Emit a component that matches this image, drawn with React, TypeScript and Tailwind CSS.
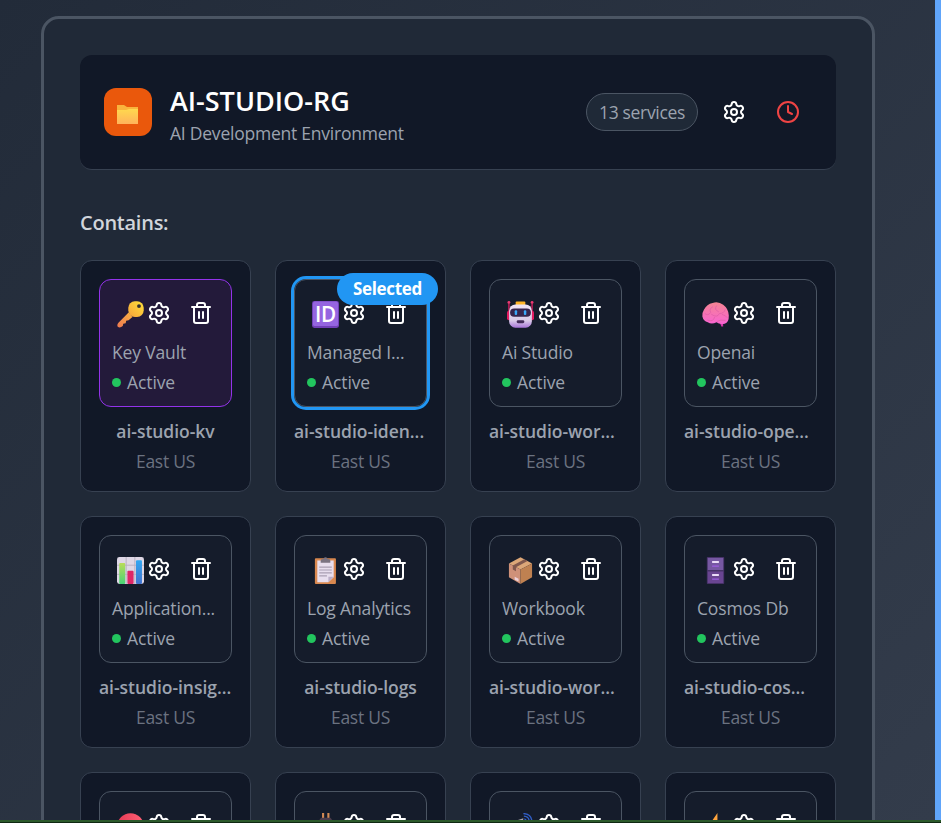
import type { ReactNode } from "react";
import { Clock, Settings, Trash2 } from "lucide-react";

type Service = {
  icon: string;
  type?: string;
  name?: string;
  tone?: "purple" | "selected";
};

const services: Service[] = [
  { icon: "key", type: "Key Vault", name: "ai-studio-kv", tone: "purple" },
  { icon: "id", type: "Managed I...", name: "ai-studio-iden...", tone: "selected" },
  { icon: "robot", type: "Ai Studio", name: "ai-studio-wor..." },
  { icon: "brain", type: "Openai", name: "ai-studio-ope..." },
  { icon: "chart", type: "Application...", name: "ai-studio-insig..." },
  { icon: "clipboard", type: "Log Analytics", name: "ai-studio-logs" },
  { icon: "box", type: "Workbook", name: "ai-studio-wor..." },
  { icon: "cabinet", type: "Cosmos Db", name: "ai-studio-cos..." },
  { icon: "red" },
  { icon: "plug" },
  { icon: "dish" },
  { icon: "bolt" },
];

const glyphs: Record<string, ReactNode> = {
  key: (
    <>
      <path d="M12 12 1.5 22.5Q-.4 24.8.8 26.8Q3 28.6 6 26L6.5 23.5 9 23 9.5 20.5 12 20 16 16.5Z" fill="url(#keyShaft)" />
      <rect x="11.7" y=".3" width="16" height="16.2" rx="6.8" fill="url(#keyHead)" />
      <circle cx="22.8" cy="5.3" r="2" fill="#35302e" />
    </>
  ),
  id: (
    <>
      <rect x="0" y="0" width="28" height="28" rx="2.5" fill="#7140b8" />
      <rect x="1" y=".5" width="26" height="25.5" rx="2" fill="#9565e0" />
      <text x="14.2" y="21.8" textAnchor="middle" fontSize="21.5" fontWeight="600" fontFamily="Open Sans, sans-serif" textLength="22" fill="#fff">ID</text>
    </>
  ),
  robot: (
    <>
      <path d="M2 3v10M26 3v10" stroke="#d71b60" strokeWidth="1.4" />
      <circle cx="2" cy="1.5" r="1.5" fill="#ed3971" /><circle cx="26" cy="1.5" r="1.5" fill="#ed3971" />
      <rect x="0" y="10" width="5" height="10" rx="2" fill="#e31c62" />
      <rect x="23" y="10" width="5" height="10" rx="2" fill="#e31c62" />
      <rect x="9" y=".5" width="10" height="4" rx="1" fill="#ffb627" />
      <rect x="2.2" y="3.5" width="23.6" height="24.2" rx="6.5" fill="url(#robotFace)" />
      <rect x="3.2" y="7.8" width="21.6" height="8.5" rx="4.2" fill="#37254d" />
      <rect x="8" y="9.5" width="2.5" height="5" rx="1" fill="#3aa9fa" />
      <rect x="17.5" y="9.5" width="2.5" height="5" rx="1" fill="#3aa9fa" />
      <rect x="10" y="20" width="8" height="3" rx="1.5" fill="#422a58" />
    </>
  ),
  brain: (
    <>
      <path d="M18 21 20 26.5 22 26.5 21.7 21Z" fill="#d638aa" />
      <path d="M2 9Q5 3 11 2Q17 0 22 4Q27.4 8 27.8 15Q28 22.5 23.5 23.5Q18 24.5 15 22Q10 24.5 6 22Q1.5 21 .4 16Q0 12 2 9Z" fill="url(#brainFill)" />
      <path d="M3 13Q6 16 9 12Q7 8 11 6M10 14Q16 18 18 13Q23 13 24 9M15 5Q12 9 17 11M6 20Q12 22 13 17M16 21Q19 19 24 20M21 14Q25 15 26 17" fill="none" stroke="#e05fa8" strokeWidth=".8" strokeLinecap="round" />
    </>
  ),
  chart: (
    <>
      <rect x="0" y="0" width="28" height="28" rx="2.5" fill="#ded7e5" />
      <path d="M0 8.5h28M0 18h28M9.5 0v28M18.5 0v28" stroke="#b8b0c2" />
      <rect x="2.3" y="6.3" width="6.2" height="21.7" rx="1" fill="url(#greenBar)" />
      <rect x="10.8" y="14.3" width="6.4" height="13.7" rx="1" fill="#df2768" />
      <rect x="19.7" y="3.3" width="6.2" height="24.7" rx="1" fill="url(#blueBar)" />
    </>
  ),
  clipboard: (
    <>
      <rect x="3" y="1.2" width="21.8" height="26.8" rx="1" fill="#d9884f" />
      <path d="M5.5 3.5h17v17.5L17 26.2H5.5Z" fill="#e8deee" />
      <path d="M22.5 20.5H17v5.7Z" fill="#bbaec8" />
      <path d="M9 6V3.3Q9 2 12 2Q12 .3 14 .3Q16 .3 16 2Q19 2 19 3.5V6Z" fill="#7b7381" />
      <path d="M7.5 10.5h13M7.5 13.5h13M7.5 16.5h13M7.5 19.5h8" stroke="#a99fb3" strokeWidth="1.2" />
    </>
  ),
  box: (
    <>
      <path d="m2 6.7 12-6.5L26 6.7 14 13Z" fill="#dca778" />
      <path d="M2 6.7 14 13v15L2 21Z" fill="#cf9179" />
      <path d="M26 6.7 14 13v15l12-7Z" fill="#bf8151" />
      <path d="M6 8.8 18 2.3l3.3 1.8L9.3 10.7v4.2L6 13Z" fill="#80584d" />
      <path d="m8 20.5 4 2v3l-4-2Z" fill="#edd0d8" />
    </>
  ),
  cabinet: (
    <>
      <rect x="5" y="0" width="18" height="28" rx=".8" fill="#463267" />
      <rect x="6" y="1" width="16" height="12.5" fill="#7658a2" />
      <rect x="6" y="15" width="16" height="12" fill="#694591" />
      <path d="M10.5 5.2h7M10.5 18.7h7" stroke="#eadcf7" strokeWidth="2" />
      <path d="M10.5 9.5h7M10.5 23h7" stroke="#9e5de1" strokeWidth="1.3" />
    </>
  ),
  red: <circle cx="14" cy="14" r="13.8" fill="url(#redFill)" />,
  plug: (
    <>
      <path d="M11.5 0v6M17 0v6" stroke="#d48a54" strokeWidth="2.2" />
      <path d="M9.5 4.8h9.5l1.5 1.7V18H8V6.5Z" fill="#4b3c4b" />
    </>
  ),
  dish: (
    <>
      <path d="M17 .6q8.5.3 8.8 8.4M17.5 3.3q5.5.3 5.5 5.7M18 6q2 .5 2 3" fill="none" stroke="#315fc9" strokeWidth="1.4" />
      <path d="m9 8 8-2.5L15 16Z" fill="#a8a3aa" />
    </>
  ),
  bolt: <path d="M16 0 5 16h7l-3 11 14-16h-7Z" fill="#ffa43d" />,
};

function Gradients() {
  return (
    <svg className="absolute size-0" aria-hidden="true">
      <defs>
        <linearGradient id="keyHead" x1="0" y1="1" x2="1" y2="0"><stop stopColor="#f6a23b" /><stop offset="1" stopColor="#ffe13a" /></linearGradient>
        <linearGradient id="keyShaft" x1="0" y1="1" x2="1" y2="0"><stop stopColor="#ee7850" /><stop offset="1" stopColor="#f9b343" /></linearGradient>
        <linearGradient id="robotFace" x2="0" y2="1"><stop stopColor="#f0e5f5" /><stop offset=".7" stopColor="#d9c9e8" /><stop offset="1" stopColor="#a875d8" /></linearGradient>
        <linearGradient id="brainFill" x2="0" y2="1"><stop stopColor="#f58493" /><stop offset="1" stopColor="#f864d1" /></linearGradient>
        <linearGradient id="greenBar" x2="0" y2="1"><stop stopColor="#b9dc58" /><stop offset="1" stopColor="#48d477" /></linearGradient>
        <linearGradient id="blueBar" x2="0" y2="1"><stop stopColor="#31a7f2" /><stop offset="1" stopColor="#4273cf" /></linearGradient>
        <linearGradient id="redFill"><stop stopColor="#e63a55" /><stop offset="1" stopColor="#ff6175" /></linearGradient>
        <linearGradient id="folder" x2="0" y2="1"><stop stopColor="#ffd84e" /><stop offset="1" stopColor="#ffb35b" /></linearGradient>
      </defs>
    </svg>
  );
}

const toneClass = {
  purple: "border-[#9333ea] bg-[#231a3a]",
  selected: "border-[#4b5563] bg-[#151c2b] outline-3 outline-[#2196f3]",
  plain: "border-[#4b5563] bg-[#151c2b]",
};

function ServiceCard({ service }: { service: Service }) {
  const truncated = service.name?.endsWith("...");
  return (
    <article className="flex h-[232px] flex-col rounded-xl border border-[#374151] bg-[#111827] px-[18px] pt-[18px]">
      <div className={"relative h-32 shrink-0 rounded-xl border px-3 pt-[19px] " + toneClass[service.tone ?? "plain"]}>
        <div className="flex h-7 items-center pl-[5px]">
          <svg viewBox="0 0 28 28" className="mt-[3px] size-[27px] shrink-0">{glyphs[service.icon]}</svg>
          <Settings className="ml-[3px] size-6 shrink-0 text-white" />
          <Trash2 className="ml-[18px] size-6 shrink-0 text-white" />
        </div>
        {service.type && (
          <>
            <p className="mt-[10px] h-[30px] text-[17.5px] leading-[30px] tracking-[-0.15px] whitespace-nowrap text-[#9ca3af]">{service.type}</p>
            <div className="flex h-[30px] items-center gap-1.5 text-[17.5px] tracking-[-0.1px] text-[#9ca3af]">
              <span className="size-[9px] rounded-full bg-[#22c55e]" />
              Active
            </div>
          </>
        )}
        {service.tone === "selected" && (
          <span className="absolute -top-[7px] -right-[12px] flex h-8 w-[101px] items-center justify-center rounded-full bg-[#2196f3] text-[17px] font-bold tracking-[-0.3px] text-white">
            Selected
          </span>
        )}
      </div>
      {service.name && (
        <>
          <h3 className={"mt-[9px] h-[30px] text-[17.5px] leading-[30px] font-semibold tracking-[-0.03px] whitespace-nowrap text-[#9ca3af] " + (truncated ? "text-left" : "text-center")}>{service.name}</h3>
          <p className="h-[30px] text-center text-[17.5px] leading-[30px] tracking-[-0.25px] text-[#6b7280]">East US</p>
        </>
      )}
    </article>
  );
}

export default function App() {
  return (
    <div className="flex h-[823px] w-[941px] flex-col overflow-hidden font-['Open_Sans',sans-serif]">
      <Gradients />
      <div className="flex h-[820px] shrink-0 overflow-hidden border-r-6 border-[#60a5fa] bg-linear-135 from-[#222b39] to-[#333c4b] pt-4 pl-[41px]">
        <main className="h-[1100px] w-[834px] shrink-0 rounded-[18px] border-3 border-[#4b5563] bg-[#202937] px-9 pt-9">
          <header className="flex h-[115px] items-center rounded-xl border-b border-[#374151] bg-[#111827] px-6">
            <div className="flex size-12 items-center justify-center rounded-xl bg-[#ea580c]">
              <svg viewBox="0 0 21 19" className="mt-[5px] mr-px h-[19px] w-[21px]">
                <path d="M0 0h7l3 2h11v17H0Z" fill="#f9b43d" />
                <path d="M0 5h9l3-1h9v15H0Z" fill="url(#folder)" />
              </svg>
            </div>
            <div className="ml-[18px] pt-[5px]">
              <h1 className="h-9 text-[27px] leading-9 font-semibold tracking-[0px] whitespace-nowrap text-white">AI-STUDIO-RG</h1>
              <p className="h-7 text-[17.5px] leading-7 tracking-[-0.23px] whitespace-nowrap text-[#9ca3af]">AI Development Environment</p>
            </div>
            <div className="ml-auto flex items-center">
              <span className="flex h-[38px] w-28 items-center justify-center rounded-full border border-[#4b5563] bg-[#1f2937] text-[17.5px] tracking-[-0.33px] text-[#9ca3af]">13 services</span>
              <Settings className="ml-6 size-6 text-white" />
              <Clock className="mr-3 ml-[30px] size-6 text-[#ef4444]" />
            </div>
          </header>
          <h2 className="mt-9 h-[34px] text-[20px] leading-[34px] font-semibold tracking-[-0.25px] text-[#d1d5db]">Contains:</h2>
          <section className="mt-5 grid grid-cols-[repeat(4,171px)] gap-6">
            {services.map((service) => (
              <ServiceCard key={service.icon} service={service} />
            ))}
          </section>
        </main>
      </div>
      <div className="h-[3px] shrink-0 border-t-2 border-[#2c5a2b] bg-[#0f2912]" />
    </div>
  );
}
